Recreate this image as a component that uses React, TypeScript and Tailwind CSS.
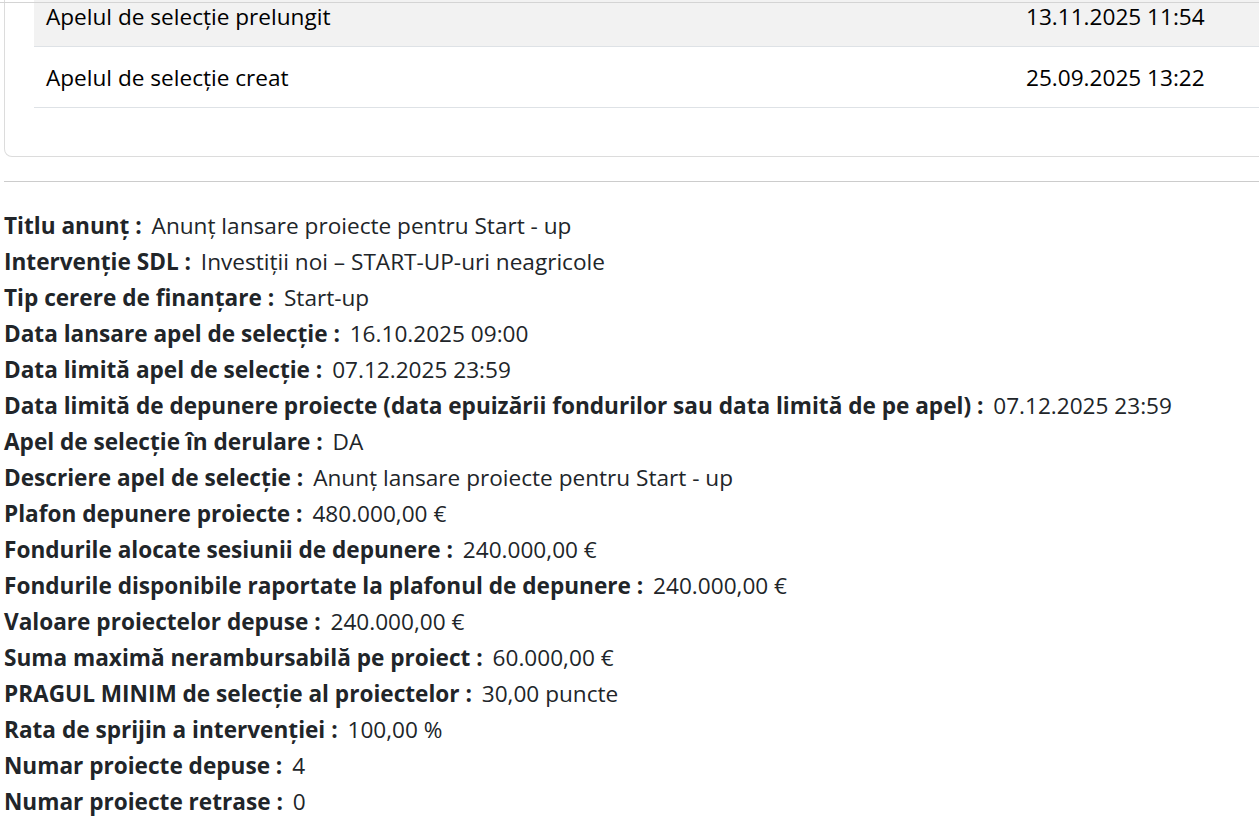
const randuri = [
  { eveniment: "Apelul de selecție prelungit", data: "13.11.2025 11:54", gri: true },
  { eveniment: "Apelul de selecție creat", data: "25.09.2025 13:22", gri: false },
];

const detalii: [string, string][] = [
  ["Titlu anunț", "Anunț lansare proiecte pentru Start - up"],
  ["Intervenție SDL", "Investiții noi – START-UP-uri neagricole"],
  ["Tip cerere de finanțare", "Start-up"],
  ["Data lansare apel de selecție", "16.10.2025 09:00"],
  ["Data limită apel de selecție", "07.12.2025 23:59"],
  [
    "Data limită de depunere proiecte (data epuizării fondurilor sau data limită de pe apel)",
    "07.12.2025 23:59",
  ],
  ["Apel de selecție în derulare", "DA"],
  ["Descriere apel de selecție", "Anunț lansare proiecte pentru Start - up"],
  ["Plafon depunere proiecte", "480.000,00 €"],
  ["Fondurile alocate sesiunii de depunere", "240.000,00 €"],
  ["Fondurile disponibile raportate la plafonul de depunere", "240.000,00 €"],
  ["Valoare proiectelor depuse", "240.000,00 €"],
  ["Suma maximă nerambursabilă pe proiect", "60.000,00 €"],
  ["PRAGUL MINIM de selecție al proiectelor", "30,00 puncte"],
  ["Rata de sprijin a intervenției", "100,00 %"],
  ["Numar proiecte depuse", "4"],
  ["Numar proiecte retrase", "0"],
];

export default function App() {
  return (
    <div
      className="relative h-[833px] w-[1259px] overflow-hidden bg-white pl-1 text-[22.6px] text-[#212529]"
      style={{ fontFamily: '"Open Sans", "Noto Sans", sans-serif' }}
    >
      {/* marginea antetului fix, peste tabel */}
      <div className="absolute left-0 right-0 top-[2px] z-10 h-px bg-[#d4d4d4]" />

      {/* cardul cu istoricul apelului (pagina e derulată) */}
      <div className="-mr-6 -mt-[14px] rounded-bl-lg border border-t-0 border-[#dcdcdc] pb-[48px] pl-[29px]">
        {randuri.map((r) => (
          <div
            key={r.eveniment}
            className={`flex h-[61px] items-center border-b border-[#dee2e6] px-3 pt-[2px] leading-[30px] text-black ${
              r.gri ? "bg-[#f2f2f2]" : "bg-white"
            }`}
          >
            <span className="flex-1">{r.eveniment}</span>
            <span className="w-[244px]">{r.data}</span>
          </div>
        ))}
      </div>

      <hr className="-mr-6 mt-[24px] border-t border-[#cccccc]" />

      <div className="pt-[26px]">
        {detalii.map(([eticheta, valoare]) => (
          <div key={eticheta} className="whitespace-nowrap leading-[36px]">
            <b className="font-bold">{eticheta} : </b>
            <span className="ml-1">{valoare}</span>
          </div>
        ))}
      </div>
    </div>
  );
}
